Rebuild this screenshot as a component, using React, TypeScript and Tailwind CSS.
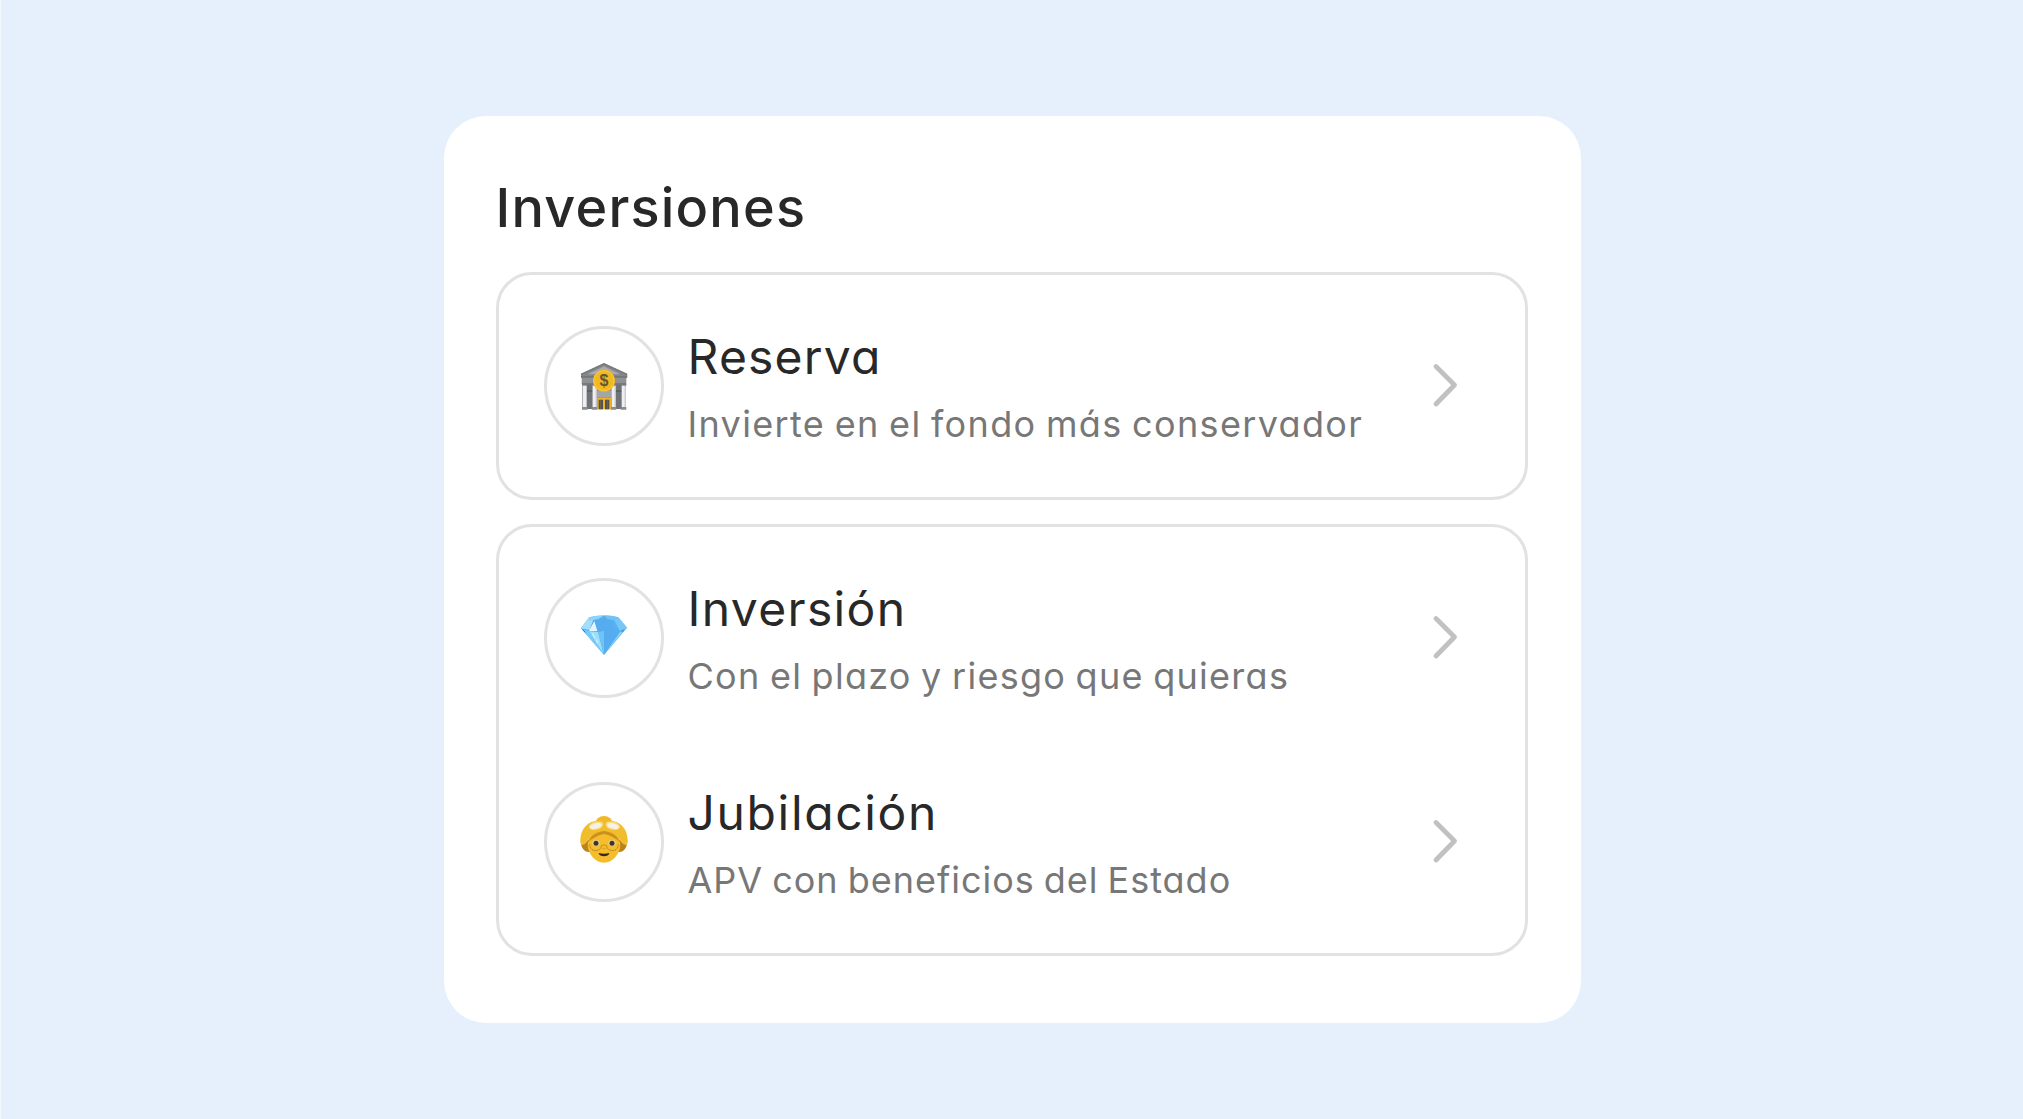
import type { ReactNode } from 'react';

const BankIcon = () => (
  <svg className="h-[60px] w-[60px]" viewBox="117 123 180 180" fill="none">
    <path d="M142 206h130v76H142z" fill="#8b8e91" />
    <path d="M155 208h17v74h-17zM242 208h20v74h-20z" fill="#707376" />
    <path d="M155 226h17v5h-17zM242 226h20v5h-20z" fill="#5c6063" />
    <path d="M186 228h44v20h-44z" fill="#a3a6a8" />
    <path d="M207 145l70 32v11H138v-11z" fill="#83868a" />
    <path d="M207 154l49 24h-98z" fill="#a9abad" />
    <path d="M138 178l69-32 69 32" stroke="#74777a" strokeWidth="4" />
    <path d="M140 188h134v20H140z" fill="#8f9295" />
    <path d="M138 186h138M141 207h132" stroke="#707376" strokeWidth="4" />
    {[144, 173, 230, 260].map((x) => (
      <g key={x}>
        <rect x={x} y="210" width="12" height="68" fill="#eeeef3" />
        <rect x={x + 9} y="210" width="3" height="68" fill="#c3c4ca" />
        <rect x={x - 2} y="207" width="16" height="5" fill="#797c80" />
        <rect x={x - 3} y="276" width="17" height="8" rx="1" fill="#8b8c90" />
      </g>
    ))}
    <path d="M187 249h41v34h-41z" fill="#f0b323" />
    <path d="M191 254h13v29h-13zM210 254h13v29h-13z" fill="#55524c" />
    <path d="M197 254v29M217 254v29" stroke="#79705a" strokeWidth="2" />
    <circle cx="207" cy="197" r="33" fill="#f3b920" />
    <circle cx="207" cy="197" r="30" stroke="#fac93c" strokeWidth="3" />
    <text x="207" y="214" textAnchor="middle" fontFamily="Liberation Sans" fontSize="48" fontWeight="700" fill="#665538">
      $
    </text>
  </svg>
);

const DiamondIcon = () => (
  <svg className="h-[60px] w-[60px]" viewBox="117 114 180 180" fill="none">
    <path d="M138 175l24-33q44-11 88 0l26 31-69 82z" fill="#55acee" />
    <path d="M138 175l24-33 16-2-14 40z" fill="#a4defb" />
    <path d="M178 153l9 30h-25z" fill="#e5f4fd" />
    <path d="M162 142q22-6 46-6l-17 11-29 6z" fill="#8bd4fa" />
    <path d="M208 136q24 0 42 6l-12 9-22-4z" fill="#72c2f6" />
    <path d="M250 142l26 31-22 9-19-29z" fill="#76c7f7" />
    <path d="M238 151l16 31-22-8z" fill="#58b1f1" />
    <path d="M140 178l24 5 42 70z" fill="#74cbf8" />
    <path d="M163 184l26 2 17 67z" fill="#9bdffb" />
    <path d="M189 186l18-3v70z" fill="#70c3f6" />
    <path d="M270 178l-15 8-46 65 12-13z" fill="#84d2fa" />
    <path d="M143 179l8 8M266 180l-6 6" stroke="#4e6678" strokeWidth="3" />
    <path d="M172 190l8 15M184 208l4 12" stroke="#e8f8ff" strokeWidth="3" />
  </svg>
);

const GrannyIcon = () => (
  <svg className="h-[60px] w-[60px]" viewBox="117 111 180 180" fill="none">
    <path d="M137 196c0 18 7 33 22 35h96c15-2 22-17 22-35z" fill="#b9831d" />
    <ellipse cx="207" cy="145" rx="26" ry="22" fill="#f0b92a" />
    <path d="M207 138c-42-8-71 20-71 58 0 8 2 13 5 15q9-1 16-12c10-16 30-24 50-26 20 2 40 10 50 26q7 11 16 12c3-2 5-7 5-15 0-38-29-66-71-58z" fill="#f1bd2d" />
    <path d="M207 168c-22 3-42 14-49 34v22h98v-22c-7-20-27-31-49-34z" fill="#c9911d" />
    <path d="M207 177c-17 3-34 12-48 24-4 32 20 62 48 62s52-30 48-62c-14-12-31-21-48-24z" fill="#f5bd2c" />
    <ellipse cx="183" cy="152" rx="22" ry="12" transform="rotate(-14 183 152)" fill="#f8dd8c" />
    <ellipse cx="233" cy="152" rx="22" ry="12" transform="rotate(14 233 152)" fill="#f8dd8c" />
    <ellipse cx="182" cy="153" rx="18" ry="8" transform="rotate(-14 182 153)" fill="#f6f3e6" />
    <ellipse cx="234" cy="153" rx="18" ry="8" transform="rotate(14 234 153)" fill="#f6f3e6" />
    <ellipse cx="183" cy="205" rx="11" ry="9" fill="#ddd6bd" />
    <ellipse cx="231" cy="205" rx="11" ry="9" fill="#ddd6bd" />
    <circle cx="183" cy="205" r="7.5" fill="#423229" />
    <circle cx="231" cy="205" r="7.5" fill="#423229" />
    <path d="M164 208c0 25 34 24 35 4q8-5 16 0c1 20 35 21 35-4" stroke="#b98421" strokeWidth="2.5" />
    <path d="M200 219q7 5 14 0" stroke="#d99d22" strokeWidth="2.5" />
    <path d="M191 234q16 4 32 0c-1 13-31 13-32 0z" fill="#40271d" />
  </svg>
);

const Chevron = () => (
  <svg className="mr-[66px] h-12 w-7 shrink-0" viewBox="0 0 28 48" fill="none">
    <path d="M5 4.5L23.5 23 5 42" stroke="#c1c1c1" strokeWidth="4.8" strokeLinecap="round" strokeLinejoin="round" />
  </svg>
);

interface OptionProps {
  icon: ReactNode;
  title: string;
  detail: string;
  titleClass: string;
  detailClass: string;
}

const Option = ({ icon, title, detail, titleClass, detailClass }: OptionProps) => (
  <a href="#" className="flex h-[120px] items-center">
    <div className="flex h-[120px] w-[120px] shrink-0 items-center justify-center rounded-full border-[3px] border-[#e2e2e2]">
      {icon}
    </div>
    <div className="ml-6 flex-1 whitespace-nowrap">
      <h2 className={`text-[48px] leading-[76px] text-[#282828] ${titleClass}`}>{title}</h2>
      <p className={`text-[36px] leading-[59px] text-[#777777] [word-spacing:-2px] ${detailClass}`}>{detail}</p>
    </div>
    <Chevron />
  </a>
);

const App = () => {
  return (
    <main className="flex h-[1119px] w-full justify-center border-l border-[#f3f8ff] bg-[#e6f0fd] pt-[116px] font-['Inter',sans-serif] [font-feature-settings:'cv11']">
      <section className="h-[907px] w-[1137px] rounded-[42px] bg-white pl-[52px] pr-[53px]">
        <h1 className="mt-[52px] text-[54px] font-medium leading-[80px] tracking-[1.2px] text-[#282828]">Inversiones</h1>

        <div className="mt-6 h-[228px] rounded-[36px] border-[3px] border-[#e2e2e2] pl-[45px] pt-[51px]">
          <Option
            icon={<BankIcon />}
            title="Reserva"
            detail="Invierte en el fondo más conservador"
            titleClass="tracking-[1.2px]"
            detailClass="tracking-[1.35px]"
          />
        </div>

        <div className="mt-6 flex h-[432px] flex-col gap-[84px] rounded-[36px] border-[3px] border-[#e2e2e2] pl-[45px] pt-[51px]">
          <Option
            icon={<DiamondIcon />}
            title="Inversión"
            detail="Con el plazo y riesgo que quieras"
            titleClass="tracking-[1.35px]"
            detailClass="tracking-[1.28px]"
          />
          <Option
            icon={<GrannyIcon />}
            title="Jubilación"
            detail="APV con beneficios del Estado"
            titleClass="tracking-[1.65px]"
            detailClass="tracking-[0.98px]"
          />
        </div>
      </section>
    </main>
  );
};

export default App;
